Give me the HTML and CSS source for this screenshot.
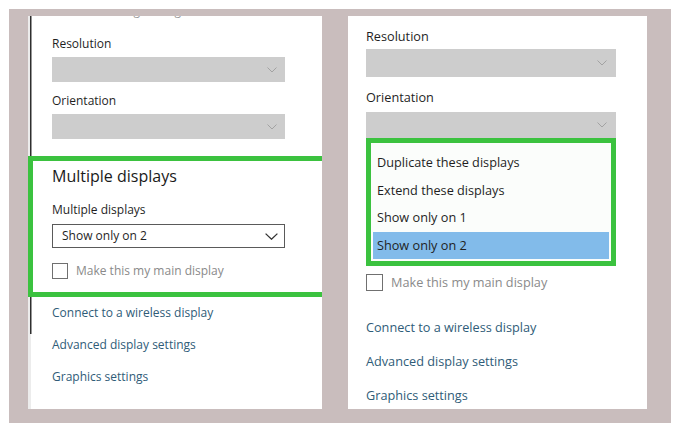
FILE: index.html
```html
<!DOCTYPE html>
<html lang="en">
<head>
    <meta charset="UTF-8">
    <meta name="viewport" content="width=device-width, initial-scale=1.0">
    <title>Multiple displays settings</title>
    <link rel="stylesheet" href="styles.css">
</head>
<body>
    <div class="frame">
        <!-- before: dropdown closed -->
        <section class="panel panel-left">
            <div class="cut"><span>Scaling settings</span></div>
            <p class="label">Resolution</p>
            <div class="select disabled">
                <svg class="chev" width="10" height="6" viewBox="0 0 10 6"><polyline points="0.5,0.5 5,5 9.5,0.5" fill="none" stroke="currentColor" stroke-width="1"/></svg>
            </div>
            <p class="label">Orientation</p>
            <div class="select disabled">
                <svg class="chev" width="10" height="6" viewBox="0 0 10 6"><polyline points="0.5,0.5 5,5 9.5,0.5" fill="none" stroke="currentColor" stroke-width="1"/></svg>
            </div>

            <div class="highlight">
                <h2>Multiple displays</h2>
                <p class="label">Multiple displays</p>
                <div class="select open-value">
                    <span>Show only on 2</span>
                    <svg class="chev" width="13" height="7" viewBox="0 0 13 7"><polyline points="0.6,0.6 6.5,6.2 12.4,0.6" fill="none" stroke="currentColor" stroke-width="1.3"/></svg>
                </div>
                <div class="check"><span class="box"></span>Make this my main display</div>
            </div>

            <ul class="links">
                <li>Connect to a wireless display</li>
                <li>Advanced display settings</li>
                <li>Graphics settings</li>
            </ul>
        </section>

        <!-- after: dropdown opened -->
        <section class="panel panel-right">
            <p class="label">Resolution</p>
            <div class="select disabled">
                <svg class="chev" width="10" height="6" viewBox="0 0 10 6"><polyline points="0.5,0.5 5,5 9.5,0.5" fill="none" stroke="currentColor" stroke-width="1"/></svg>
            </div>
            <p class="label">Orientation</p>
            <div class="select disabled">
                <svg class="chev" width="10" height="6" viewBox="0 0 10 6"><polyline points="0.5,0.5 5,5 9.5,0.5" fill="none" stroke="currentColor" stroke-width="1"/></svg>
            </div>

            <ul class="options">
                <li>Duplicate these displays</li>
                <li>Extend these displays</li>
                <li>Show only on 1</li>
                <li class="selected">Show only on 2</li>
            </ul>

            <div class="check"><span class="box"></span>Make this my main display</div>

            <ul class="links">
                <li>Connect to a wireless display</li>
                <li>Advanced display settings</li>
                <li>Graphics settings</li>
            </ul>
        </section>
    </div>
</body>
</html>
```

FILE: styles.css
```css
body {
    margin: 0;
    background-color: #fff;
    font-family: "Open Sans", "Noto Sans", Arial, sans-serif;
    color: #1f1f1f;
}

.frame {
    margin: 9px 0 0 9px;
    width: 619px;
    height: 393px;
    padding: 7px 24px 14px 19px;
    background-color: #c9bdbd;
    display: flex;
    gap: 26px;
}

.panel {
    background-color: #fff;
    height: 393px;
    overflow: hidden;
    box-sizing: border-box;
}

p, h2, ul {
    margin: 0;
    padding: 0;
}

ul {
    list-style: none;
}

/* left screenshot */
.panel-left {
    width: 294px;
    padding-left: 24px;
    font-size: 12px;
    line-height: 16px;
    background:
        linear-gradient(#2e2e2e, #2e2e2e) 2px 0 / 1.5px 318px no-repeat,
        linear-gradient(#ececec, #ececec) 0 0 / 3px 100% no-repeat,
        #fff;
}

/* bottom of a line scrolled out of view */
.cut {
    height: 3px;
    overflow: hidden;
    color: #9a9a9a;
}

.cut span {
    display: block;
    margin-top: -13px;
    padding-left: 49px;
    white-space: nowrap;
}

.panel-left .label {
    margin-top: 17px;
}

.panel-left .select {
    margin-top: 5px;
    width: 233px;
    height: 25px;
}

.panel-left .select + .label {
    margin-top: 11px;
}

.select {
    display: flex;
    align-items: center;
    justify-content: flex-end;
    box-sizing: border-box;
    padding-right: 8px;
}

.select.disabled {
    background-color: #cdcdcd;
    color: #a2a2a2;
}

.select.open-value {
    justify-content: space-between;
    border: 1.5px solid #5a5a5a;
    padding: 0 6px 0 9px;
    color: #1f1f1f;
    font-size: 12px;
}

.select.open-value .chev {
    color: #333;
}

.highlight {
    margin: 17px -30px 0 -24px;
    padding: 4px 0 13px 19px;
    border: 5px solid #3bc23f;
    border-right: none;
}

.highlight h2 {
    font-size: 16px;
    line-height: 22px;
    font-weight: 400;
    color: #1a1a1a;
}

.highlight .label {
    margin-top: 15px;
}

.highlight .select {
    margin-top: 6px;
    height: 24px;
}

.check {
    display: flex;
    align-items: center;
    gap: 8px;
    color: #8a8a8a;
}

.box {
    box-sizing: border-box;
    border: 1.5px solid #707070;
    background-color: #fff;
}

.panel-left .check {
    margin-top: 15px;
    height: 16px;
}

.panel-left .box {
    width: 16px;
    height: 16px;
}

.links li {
    color: #2f5c78;
}

.panel-left .links li {
    margin-top: 16px;
}

.panel-left .links li:first-child {
    margin-top: 8px;
}

/* right screenshot */
.panel-right {
    width: 299px;
    padding: 12px 0 0 18px;
    font-size: 12.7px;
    line-height: 17px;
}

.panel-right .select {
    margin-top: 4px;
    width: 250px;
    height: 28px;
    padding-right: 9px;
}

.panel-right .select + .label {
    margin-top: 12px;
}

.panel-right .select:nth-of-type(2) {
    margin-top: 6px;
    height: 26px;
}

.options {
    width: 250px;
    box-sizing: border-box;
    border: 5px solid #3bc23f;
    padding: 6px 2px 2px;
    background-color: #fbfdfb;
    color: #1f1f1f;
}

.options li {
    height: 27.5px;
    line-height: 27.5px;
    padding-left: 4px;
}

.options li.selected {
    background-color: #82bbea;
}

.panel-right .check {
    margin-top: 8px;
    height: 17px;
}

.panel-right .box {
    width: 17px;
    height: 17px;
}

.panel-right .links li {
    margin-top: 17px;
}

.panel-right .links li:first-child {
    margin-top: 28px;
}
```
